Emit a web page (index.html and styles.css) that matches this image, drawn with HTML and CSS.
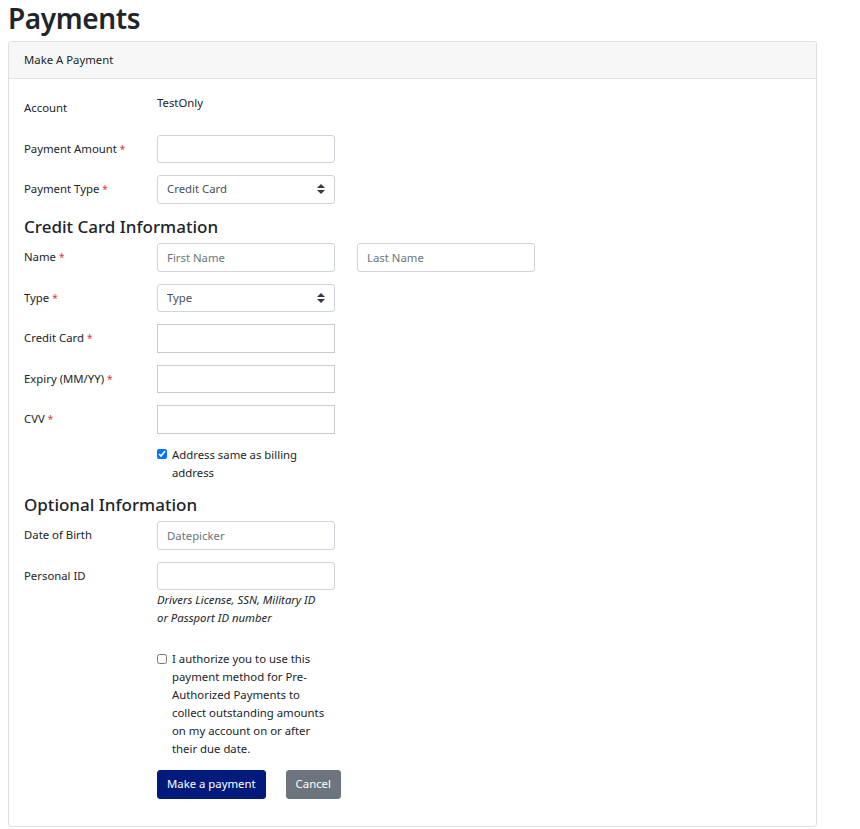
FILE: index.html
```html
<!DOCTYPE html>
<html lang="en">
<head>
<meta charset="utf-8">
<title>Payments</title>
<link rel="stylesheet" href="styles.css">
</head>
<body>
<div class="page">
  <h1 class="title">Payments</h1>
  <div class="card">
    <div class="card-header">Make A Payment</div>
    <div class="card-body">
      <div class="form-row">
        <label class="form-label">Account</label>
        <div class="field"><div class="static">TestOnly</div></div>
      </div>
      <div class="form-row">
        <label class="form-label">Payment Amount <span class="req">*</span></label>
        <div class="field"><input class="input" type="text"></div>
      </div>
      <div class="form-row">
        <label class="form-label">Payment Type <span class="req">*</span></label>
        <div class="field select-wrap">
          <select class="input select"><option>Credit Card</option></select>
          <svg class="caret" width="8" height="10" viewBox="0 0 4 5"><path d="M2 0L0 2h4zm0 5L0 3h4z" fill="#343a40"/></svg>
        </div>
      </div>

      <h4 class="section">Credit Card Information</h4>
      <div class="form-row">
        <label class="form-label">Name <span class="req">*</span></label>
        <div class="field"><input class="input" type="text" placeholder="First Name"></div>
        <div class="field field-gap"><input class="input" type="text" placeholder="Last Name"></div>
      </div>
      <div class="form-row">
        <label class="form-label">Type <span class="req">*</span></label>
        <div class="field select-wrap">
          <select class="input select"><option>Type</option></select>
          <svg class="caret" width="8" height="10" viewBox="0 0 4 5"><path d="M2 0L0 2h4zm0 5L0 3h4z" fill="#343a40"/></svg>
        </div>
      </div>
      <div class="form-row">
        <label class="form-label">Credit Card <span class="req">*</span></label>
        <div class="field"><div class="hosted"></div></div>
      </div>
      <div class="form-row">
        <label class="form-label">Expiry (MM/YY) <span class="req">*</span></label>
        <div class="field"><div class="hosted"></div></div>
      </div>
      <div class="form-row">
        <label class="form-label">CVV <span class="req">*</span></label>
        <div class="field"><div class="hosted"></div></div>
      </div>
      <div class="form-row">
        <div class="form-label spacer"></div>
        <div class="field">
          <label class="check"><input type="checkbox" class="check-input" checked><span>Address same as billing address</span></label>
        </div>
      </div>

      <h4 class="section">Optional Information</h4>
      <div class="form-row">
        <label class="form-label">Date of Birth</label>
        <div class="field"><input class="input" type="text" placeholder="Datepicker"></div>
      </div>
      <div class="form-row">
        <label class="form-label">Personal ID</label>
        <div class="field">
          <input class="input" type="text">
          <div class="help">Drivers License, SSN, Military ID or Passport ID number</div>
        </div>
      </div>
      <div class="form-row auth-row">
        <div class="form-label spacer"></div>
        <div class="field">
          <label class="check"><input type="checkbox" class="check-input"><span>I authorize you to use this payment method for Pre-Authorized Payments to collect outstanding amounts on my account on or after their due date.</span></label>
        </div>
      </div>
      <div class="form-row">
        <div class="form-label spacer"></div>
        <div class="buttons">
          <button class="btn btn-primary" type="button">Make a payment</button>
          <button class="btn btn-secondary" type="button">Cancel</button>
        </div>
      </div>
    </div>
  </div>
</div>
</body>
</html>
```
FILE: styles.css
```css
html, body {
  margin: 0;
  padding: 0;
  background: #fff;
}
body {
  font-family: "Noto Sans", "Open Sans", sans-serif;
  font-size: 11.35px;
  line-height: 18px;
  color: #212529;
}
.page {
  width: 809px;
  margin-left: 8px;
}
.title {
  margin: 0 0 5px 0;
  font-size: 28px;
  line-height: 36px;
  font-weight: 600;
  letter-spacing: -0.4px;
  color: #212529;
}
.card {
  border: 1px solid #dfdfdf;
  border-radius: 3px;
  background: #fff;
}
.card-header {
  padding: 9px 15px;
  background: #f7f7f7;
  border-bottom: 1px solid #dfdfdf;
  border-radius: 3px 3px 0 0;
}
.card-body {
  padding: 15px;
}
.form-row {
  display: flex;
  align-items: flex-start;
  margin-bottom: 12px;
}
.form-label {
  width: 133px;
  flex: none;
  padding: 5.25px 0;
}
.form-label.spacer {
  padding: 0;
}
.req {
  color: #dc3545;
  font-size: 10px;
}
.field {
  width: 178px;
  flex: none;
}
.field-gap {
  margin-left: 22px;
}
.static {
  line-height: 18px;
}
.input {
  display: block;
  width: 100%;
  height: 28.5px;
  box-sizing: border-box;
  margin: 0;
  padding: 4.25px 9px;
  border: 1px solid #ced4da;
  border-radius: 3px;
  background: #fff;
  font-family: inherit;
  font-size: 11.35px;
  line-height: 18px;
  color: #495057;
  outline: none;
}
.input::placeholder {
  color: #6c757d;
}
.select-wrap {
  position: relative;
}
.select {
  appearance: none;
  -webkit-appearance: none;
  padding-right: 24px;
}
.caret {
  position: absolute;
  right: 10px;
  top: 9.25px;
}
.hosted {
  height: 28.5px;
  box-sizing: border-box;
  border: 1px solid #cacaca;
  background: #fff;
}
.section {
  margin: 0 0 6px 0;
  font-size: 17px;
  line-height: 21.6px;
  font-weight: 500;
  color: #212529;
}
.check {
  display: flex;
  align-items: flex-start;
}
.check-input {
  flex: none;
  width: 10px;
  height: 10px;
  margin: 3.6px 5px 0 0;
}
.help {
  width: 168px;
  margin-top: 1px;
  font-style: italic;
  line-height: 17.5px;
  color: #212529;
}
.auth-row {
  padding-top: 12px;
}
.buttons {
  display: flex;
  gap: 20px;
}
.btn {
  height: 28.5px;
  box-sizing: border-box;
  padding: 4.25px 9px;
  border: 1px solid transparent;
  border-radius: 3px;
  font-family: inherit;
  font-size: 11.35px;
  line-height: 18px;
  color: #fff;
  cursor: pointer;
}
.btn-primary {
  background: #011b7c;
  border-color: #011b7c;
}
.btn-secondary {
  background: #6c757d;
  border-color: #6c757d;
}
```
